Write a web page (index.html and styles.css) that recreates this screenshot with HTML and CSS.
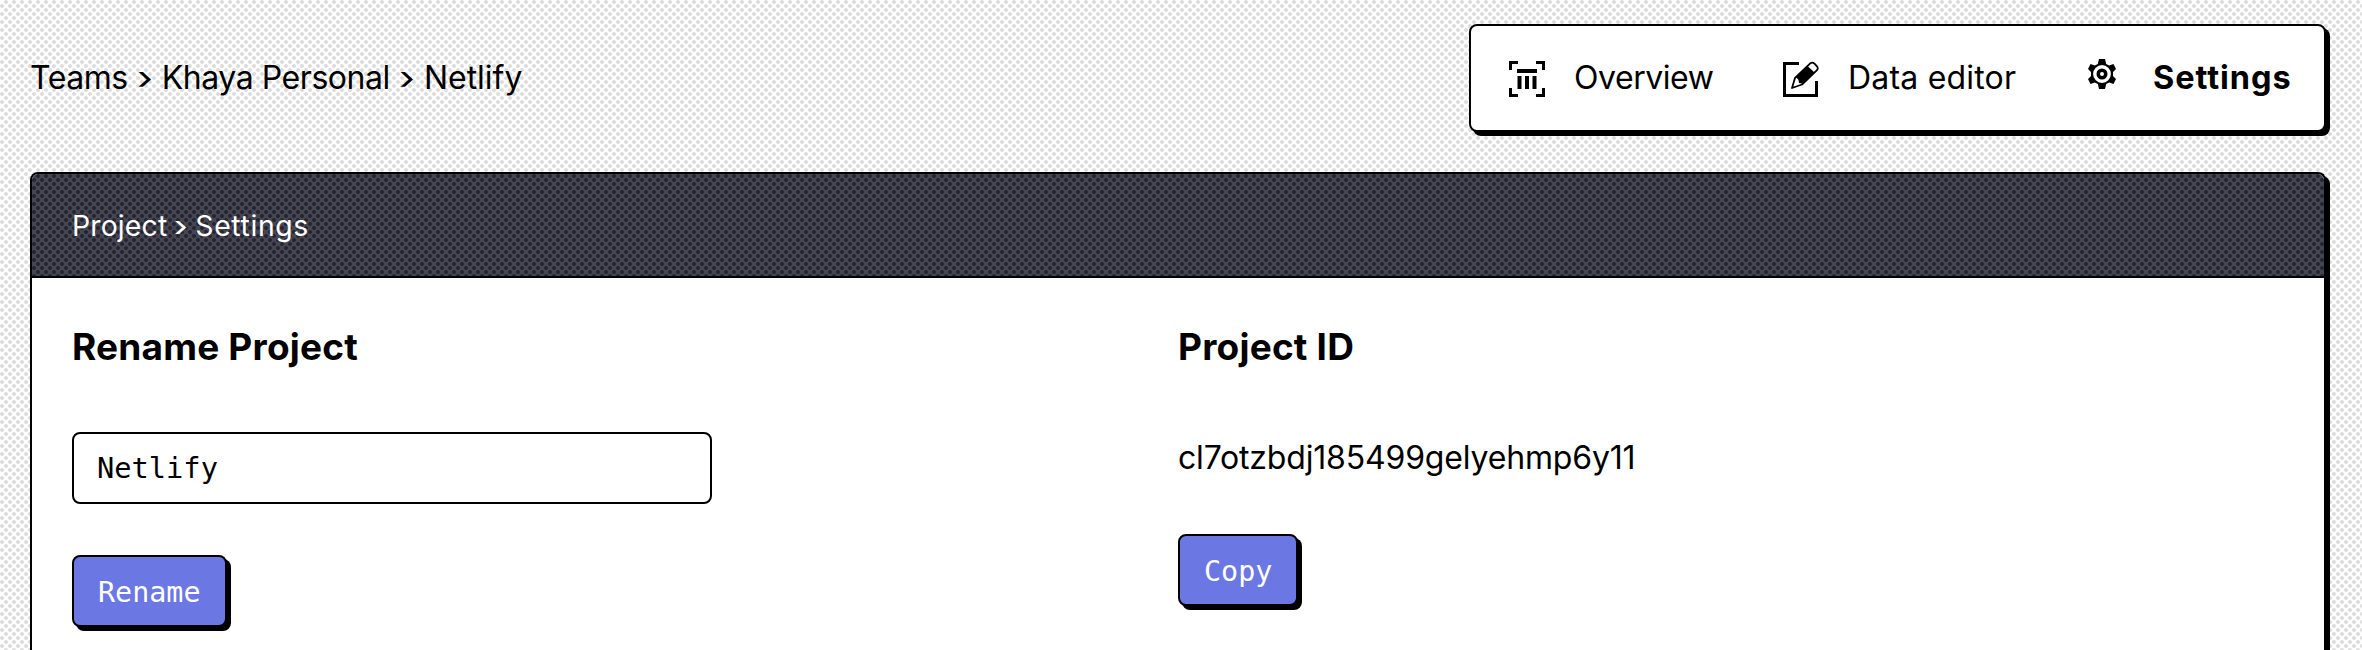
FILE: index.html
```html
<!DOCTYPE html>
<html lang="en">
<head>
<meta charset="utf-8">
<title>Netlify settings</title>
<link rel="stylesheet" href="styles.css">
</head>
<body>
<header class="topbar">
  <div class="crumbs"><span class="tight">Teams</span><span class="sep">›</span><span class="tight">Khaya Personal</span><span class="sep">›</span><span>Netlify</span></div>
  <nav class="tabs">
    <a class="tab">
      <svg class="icon" viewBox="0 0 36 36"><path d="M1.500 9V1.500H9M27 1.500h7.500V9M34.500 27v7.500H27M9 34.500H1.500V27" fill="none" stroke="#000" stroke-width="3"/><path d="M8 8h20v4H8zM8.500 15h4v13h-4zM16 15h4v13h-4zM23.500 15h4v13h-4z"/></svg>
      <span class="tight">Overview</span>
    </a>
    <a class="tab">
      <svg class="icon" viewBox="0 0 36 36"><path d="M16 2.500H1.500v32h32V20" fill="none" stroke="#000" stroke-width="3"/><path d="M9 27l3-10L27.500 2.200q2-1.200 4 .5l2.500 2.600q1.500 2 0 3.900L19 23.500z" fill="#fff" stroke="#000" stroke-width="1.800" stroke-linejoin="round"/><path d="M13 16L24.500 5l7 6.500L19 22.500l-3-.5-.5-3z"/></svg>
      <span class="loose">Data editor</span>
    </a>
    <a class="tab active">
      <svg class="gear" viewBox="0 0 28 30"><path d="M11 0h6l1.200 5 3 1.500L25.500 5l2.500 5-3 3v4l3 3-2.500 5-4.300-1.500-3 1.500L17 30h-6l-1.200-5-3-1.500L2.500 25 0 20l3-3v-4l-3-3 2.500-5 4.300 1.500 3-1.500z"/><circle cx="14" cy="15" r="7.200" fill="none" stroke="#fff" stroke-width="3.400"/><circle cx="14" cy="15" r="2" fill="#fff"/></svg>
      <span>Settings</span>
    </a>
  </nav>
</header>
<main class="card">
  <div class="card-head"><span>Project</span><span class="sep">›</span><span class="page-name">Settings</span></div>
  <div class="card-body">
    <section class="panel">
      <h2>Rename Project</h2>
      <input class="field" type="text" value="Netlify">
      <button class="btn">Rename</button>
    </section>
    <section class="panel">
      <h2>Project ID</h2>
      <p class="pid">cl7otzbdj185499gelyehmp6y11</p>
      <button class="btn">Copy</button>
    </section>
  </div>
</main>
</body>
</html>
```
FILE: styles.css
```css
* { box-sizing: border-box; }

body {
  margin: 0;
  height: 650px;
  overflow: hidden;
  padding: 24px 36px 0 30px;
  color: #000;
  font: 32px/44px Inter, sans-serif;
  background-color: #fff;
  background-image: radial-gradient(circle, #dcdcdc 1.500px, transparent 2.300px), radial-gradient(circle, #dcdcdc 1.500px, transparent 2.300px);
  background-size: 8px 8px;
  background-position: -2px 2px, 2px -2px;
}

.topbar { display: flex; justify-content: space-between; align-items: center; height: 108px; }
.crumbs { display: flex; white-space: nowrap; }
.tight { letter-spacing: -.45px; }
.loose { letter-spacing: .2px; }
.sep { width: 34px; text-align: center; transform: scaleX(1.300); }

.tabs {
  display: grid;
  grid-template-columns: 274px 305px auto;
  align-items: center;
  width: 857px;
  height: 108px;
  padding-left: 38px;
  background: #fff;
  border: 2px solid #000;
  border-radius: 8px;
  box-shadow: 4px 4px 0 #000;
}
.tab { display: flex; align-items: center; gap: 29px; white-space: nowrap; }
.icon { width: 36px; height: 36px; margin-top: 2px; }
.gear { width: 28px; height: 30px; margin: 0 8px 8px 0; }
.active { font-weight: 700; font-size: 32.500px; letter-spacing: .95px; }

.card {
  height: 478px;
  margin-top: 40px;
  background: #fff;
  border: 2px solid #000;
  border-bottom: 0;
  border-radius: 8px 8px 0 0;
  box-shadow: 4px 4px 0 #000;
}
.card-head {
  display: flex;
  align-items: center;
  height: 104px;
  padding: 2px 40px 0;
  border-bottom: 2px solid #000;
  border-radius: 6px 6px 0 0;
  color: #fff;
  font-size: 28.400px;
  letter-spacing: .15px;
  background-color: #464653;
  background-image: radial-gradient(circle, #252531 1.500px, transparent 2.300px), radial-gradient(circle, #252531 1.500px, transparent 2.300px);
  background-size: 8px 8px;
  background-position: -2px 2px, 2px -2px;
}
.card-head .sep { width: 28px; }
.page-name { letter-spacing: .6px; }
.card-body { display: grid; grid-template-columns: 1fr 1fr; padding: 44px 40px 0; }
.panel { display: flex; flex-direction: column; align-items: flex-start; }
h2 { margin: 0 0 61px; font-size: 37px; line-height: 49px; font-weight: 700; letter-spacing: .2px; }
.pid { margin: 4px 0 54px; letter-spacing: -.17px; }

.field, .btn {
  height: 72px;
  border: 2px solid #000;
  border-radius: 8px;
  font: 28.400px "DejaVu Sans Mono", monospace;
}
.field { width: 640px; padding: 0 22px 1px 23px; margin-bottom: 51px; background: #fff; color: #000; font-size: 28.700px; }
.btn { padding: 2px 24px 0; background: #6b77e3; color: #fff; box-shadow: 4px 4px 0 #000; }
```
